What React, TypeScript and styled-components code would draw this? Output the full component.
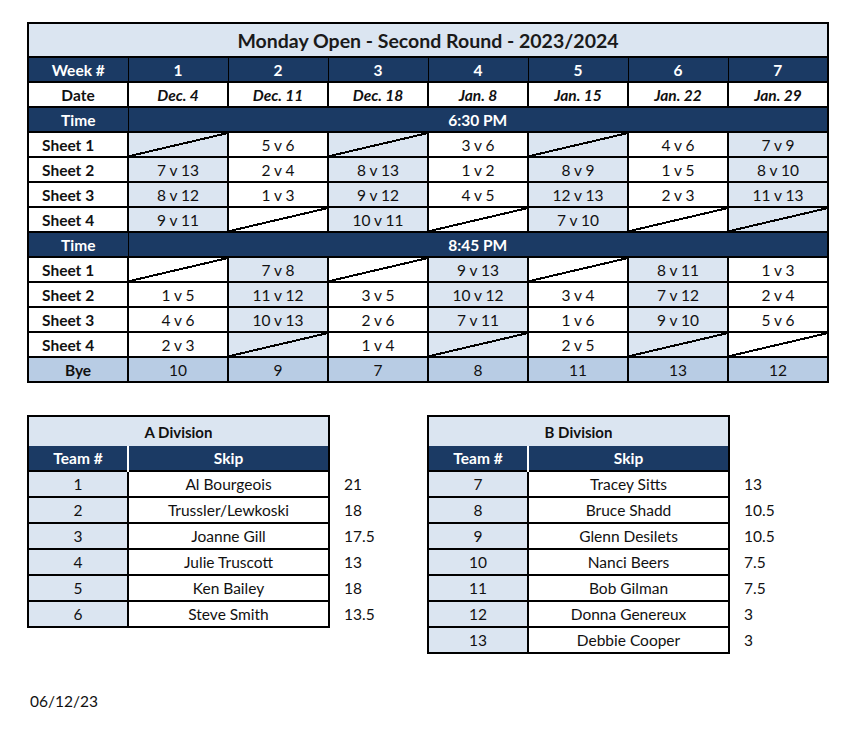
import React from "react";
import styled, { createGlobalStyle } from "styled-components";

const NAVY = "#1b3a64";
const LIGHT = "#dbe5f1";
const BYE = "#b8cce4";

const weeks = ["1", "2", "3", "4", "5", "6", "7"];
const dates = ["Dec. 4", "Dec. 11", "Dec. 18", "Jan. 8", "Jan. 15", "Jan. 22", "Jan. 29"];

// empty string = no game that sheet (diagonal)
const early: string[][] = [
  ["", "5 v 6", "", "3 v 6", "", "4 v 6", "7 v 9"],
  ["7 v 13", "2 v 4", "8 v 13", "1 v 2", "8 v 9", "1 v 5", "8 v 10"],
  ["8 v 12", "1 v 3", "9 v 12", "4 v 5", "12 v 13", "2 v 3", "11 v 13"],
  ["9 v 11", "", "10 v 11", "", "7 v 10", "", ""],
];
const late: string[][] = [
  ["", "7 v 8", "", "9 v 13", "", "8 v 11", "1 v 3"],
  ["1 v 5", "11 v 12", "3 v 5", "10 v 12", "3 v 4", "7 v 12", "2 v 4"],
  ["4 v 6", "10 v 13", "2 v 6", "7 v 11", "1 v 6", "9 v 10", "5 v 6"],
  ["2 v 3", "", "1 v 4", "", "2 v 5", "", ""],
];
const byes = ["10", "9", "7", "8", "11", "13", "12"];

const aDivision = [
  ["1", "Al Bourgeois", "21"],
  ["2", "Trussler/Lewkoski", "18"],
  ["3", "Joanne Gill", "17.5"],
  ["4", "Julie Truscott", "13"],
  ["5", "Ken Bailey", "18"],
  ["6", "Steve Smith", "13.5"],
];
const bDivision = [
  ["7", "Tracey Sitts", "13"],
  ["8", "Bruce Shadd", "10.5"],
  ["9", "Glenn Desilets", "10.5"],
  ["10", "Nanci Beers", "7.5"],
  ["11", "Bob Gilman", "7.5"],
  ["12", "Donna Genereux", "3"],
  ["13", "Debbie Cooper", "3"],
];

const GlobalStyle = createGlobalStyle`
  body {
    margin: 0;
    background: #fff;
    font-family: Lato, "Open Sans", Arial, sans-serif;
    color: #111;
  }
`;

const Page = styled.div`
  padding: 22px 0 0 27px;
  width: 866px;
  box-sizing: border-box;
`;

const Schedule = styled.table`
  border-collapse: collapse;
  table-layout: fixed;
  width: 802px;
  border: 2px solid #000;
  td {
    border: 2px solid #000;
    padding: 0;
    text-align: center;
    height: 23px;
    font-size: 15.5px;
  }
`;

const TitleCell = styled.td`
  && {
    background: ${LIGHT};
    font-size: 19.5px;
    font-weight: 700;
    height: 32px;
    color: #1a1a1a;
    border-bottom-width: 1px;
  }
`;

const HeadCell = styled.td`
  && {
    background: ${NAVY};
    color: #fff;
    font-weight: 700;
    border-left-width: 1px;
    border-right-width: 1px;
  }
`;

const LabelCell = styled.td<{ $center?: boolean }>`
  && {
    font-weight: 700;
    text-align: ${(p) => (p.$center ? "center" : "left")};
    padding-left: ${(p) => (p.$center ? 0 : 13)}px;
    background: #fff;
  }
`;

const DateCell = styled.td`
  && {
    font-weight: 700;
    font-style: italic;
    background: #fff;
  }
`;

const GameCell = styled.td<{ $shaded: boolean; $bye?: boolean }>`
  && {
    background-color: ${(p) => (p.$bye ? BYE : p.$shaded ? LIGHT : "#fff")};
  }
`;

const EmptyCell = styled(GameCell)`
  && {
    background-image: linear-gradient(
      to top left,
      transparent calc(50% - 1.2px),
      #000 calc(50% - 1.2px),
      #000 calc(50% + 0.8px),
      transparent calc(50% + 0.8px)
    );
  }
`;

const ByeLabel = styled.td`
  && {
    background: ${BYE};
    font-weight: 700;
  }
`;

const Divisions = styled.div`
  display: grid;
  grid-template-columns: 400px 400px;
  align-items: start;
  margin-top: 32px;
`;

const DivisionTable = styled.table`
  border-collapse: collapse;
  table-layout: fixed;
  width: 398px;
  td {
    padding: 0;
    height: 24px;
    font-size: 15.5px;
    text-align: center;
  }
`;

const DivTitle = styled.td`
  && {
    background: ${LIGHT};
    font-weight: 700;
    font-size: 15px;
    height: 29px;
    border: 2px solid #000;
    border-bottom: none;
  }
`;

const DivHead = styled.td<{ $first?: boolean }>`
  && {
    background: ${NAVY};
    color: #fff;
    font-weight: 700;
    border-left: 2px solid ${(p) => (p.$first ? "#000" : "#fff")};
    border-right: 2px solid ${(p) => (p.$first ? "#fff" : "#000")};
  }
`;

const TeamCell = styled.td`
  && {
    background: ${LIGHT};
    border: 2px solid #000;
  }
`;

const SkipCell = styled.td`
  && {
    background: #fff;
    border: 2px solid #000;
  }
`;

const ScoreCell = styled.td`
  && {
    text-align: left;
    padding-left: 14px;
  }
`;

const Printed = styled.div`
  margin-top: 38px;
  padding-left: 3px;
  font-size: 15.5px;
`;

const ScheduleBlock = ({ rows, shadeOdd }: { rows: string[][]; shadeOdd: boolean }) => (
  <>
    {rows.map((row, r) => (
      <tr key={r}>
        <LabelCell>Sheet {r + 1}</LabelCell>
        {row.map((game, c) => {
          const shaded = (c % 2 === 0) === shadeOdd;
          return game ? (
            <GameCell key={c} $shaded={shaded}>{game}</GameCell>
          ) : (
            <EmptyCell key={c} $shaded={shaded} />
          );
        })}
      </tr>
    ))}
  </>
);

const Division = ({ name, teams }: { name: string; teams: string[][] }) => (
  <DivisionTable>
    <colgroup>
      <col style={{ width: 100 }} />
      <col style={{ width: 201 }} />
      <col style={{ width: 97 }} />
    </colgroup>
    <tbody>
      <tr>
        <DivTitle colSpan={2}>{name}</DivTitle>
        <td />
      </tr>
      <tr>
        <DivHead $first>Team #</DivHead>
        <DivHead>Skip</DivHead>
        <td />
      </tr>
      {teams.map(([num, skip, pts]) => (
        <tr key={num}>
          <TeamCell>{num}</TeamCell>
          <SkipCell>{skip}</SkipCell>
          <ScoreCell>{pts}</ScoreCell>
        </tr>
      ))}
    </tbody>
  </DivisionTable>
);

export default function App() {
  return (
    <Page>
      <GlobalStyle />
      <Schedule>
        <tbody>
          <tr>
            <TitleCell colSpan={8}>Monday Open - Second Round - 2023/2024</TitleCell>
          </tr>
          <tr>
            <HeadCell>Week #</HeadCell>
            {weeks.map((w) => (
              <HeadCell key={w}>{w}</HeadCell>
            ))}
          </tr>
          <tr>
            <LabelCell $center>Date</LabelCell>
            {dates.map((d) => (
              <DateCell key={d}>{d}</DateCell>
            ))}
          </tr>
          <tr>
            <HeadCell>Time</HeadCell>
            <HeadCell colSpan={7}>6:30 PM</HeadCell>
          </tr>
          <ScheduleBlock rows={early} shadeOdd />
          <tr>
            <HeadCell>Time</HeadCell>
            <HeadCell colSpan={7}>8:45 PM</HeadCell>
          </tr>
          <ScheduleBlock rows={late} shadeOdd={false} />
          <tr>
            <ByeLabel>Bye</ByeLabel>
            {byes.map((b, i) => (
              <GameCell key={i} $shaded $bye>{b}</GameCell>
            ))}
          </tr>
        </tbody>
      </Schedule>
      <Divisions>
        <Division name="A Division" teams={aDivision} />
        <Division name="B Division" teams={bDivision} />
      </Divisions>
      <Printed>06/12/23</Printed>
    </Page>
  );
}
